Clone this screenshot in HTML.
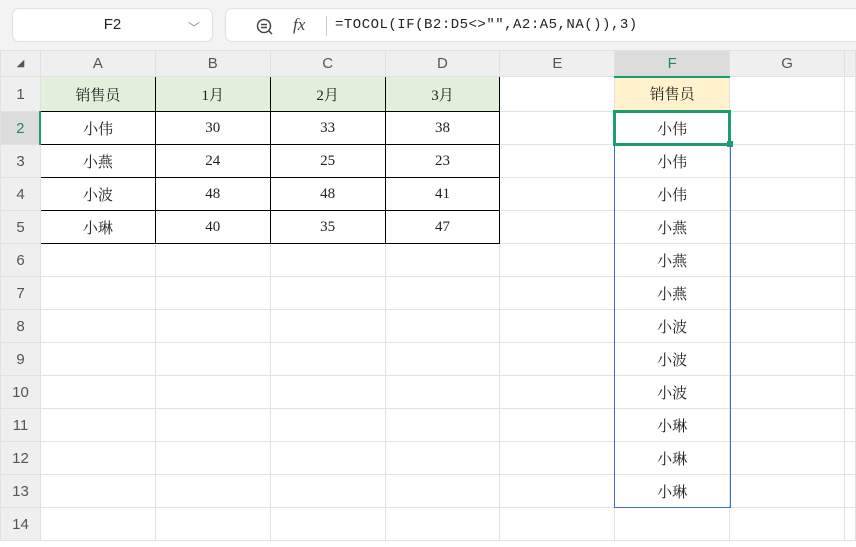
<!DOCTYPE html>
<html><head><meta charset="utf-8"><style>
*{box-sizing:border-box;margin:0;padding:0}
body{width:856px;height:547px;overflow:hidden;background:#fff;font-family:"Liberation Sans","Noto Sans CJK SC",sans-serif;position:relative}
.top{position:absolute;left:0;top:0;width:856px;height:50px;background:#f3f3f3}
.nb{position:absolute;left:12px;top:8px;width:201px;height:34px;background:#fff;border:1px solid #e0e0e0;border-radius:7px;font-size:15px;line-height:32px;text-align:center;color:#222}
.fb{position:absolute;left:225px;top:8px;width:640px;height:34px;background:#fff;border:1px solid #e0e0e0;border-radius:7px}
.ft{position:absolute;left:335px;top:8px;line-height:34px;font-family:"Liberation Mono","Noto Sans CJK SC",monospace;font-size:14px;color:#222;letter-spacing:0.5px}
table{position:absolute;left:0;top:50px;border-collapse:collapse;table-layout:fixed}
td{border:1px solid #e1e1e1;height:33px;text-align:center;font-size:15px;color:#222;padding:0;font-family:"Liberation Serif","Noto Serif CJK SC",serif}
tr.h td{height:26px;background:#efefef;color:#555;font-family:"Liberation Sans",sans-serif;font-size:15px}
td.r{background:#efefef;color:#555;font-family:"Liberation Sans",sans-serif;font-size:15px}
tr.r1 td{height:35px}
.g{background:#e2efda}
.y{background:#fff2cc}
.k{border:1px solid #000}
</style></head><body>
<div class="top"></div>
<div class="nb">F2<span style="position:absolute;right:12px;top:3px;color:#888;font-size:12px">﹀</span></div>
<div class="fb">
<svg style="position:absolute;left:29px;top:8px" width="20" height="20" viewBox="0 0 20 20"><circle cx="9" cy="9" r="6.5" fill="none" stroke="#444" stroke-width="1.5"/><path d="M6 7.5h6M6 10.5h6M14 14l3 3" stroke="#444" stroke-width="1.5"/></svg>
<span style="position:absolute;left:67px;top:6px;font-family:'Liberation Serif',serif;font-style:italic;font-size:17px;color:#444">fx</span>
<div style="position:absolute;left:100px;top:7px;width:1px;height:20px;background:#ccc"></div>
</div>
<div class="ft">=TOCOL(IF(B2:D5&lt;&gt;"",A2:A5,NA()),3)</div>
<table>
<colgroup><col style="width:40px"><col style="width:115px"><col style="width:115px"><col style="width:115px"><col style="width:115px"><col style="width:115px"><col style="width:115px"><col style="width:115px"><col style="width:11px"></colgroup>
<tr class="h"><td style="font-size:10px">◢</td><td>A</td><td>B</td><td>C</td><td>D</td><td>E</td><td style="background:#dcdcdc;color:#1e8a5e;border-bottom:2px solid #1e9c6e">F</td><td>G</td><td></td></tr>
<tr class="r1"><td class="r">1</td><td class="g k">销售员</td><td class="g k">1月</td><td class="g k">2月</td><td class="g k">3月</td><td></td><td class="y">销售员</td><td></td><td></td></tr>
<tr><td class="r" style="background:#dcdcdc;color:#1e8a5e;border-right:2px solid #1e9c6e">2</td><td class="k">小伟</td><td class="k">30</td><td class="k">33</td><td class="k">38</td><td></td><td style="border:3px solid #1e9c6e">小伟</td><td></td><td></td></tr>
<tr><td class="r">3</td><td class="k">小燕</td><td class="k">24</td><td class="k">25</td><td class="k">23</td><td></td><td>小伟</td><td></td><td></td></tr>
<tr><td class="r">4</td><td class="k">小波</td><td class="k">48</td><td class="k">48</td><td class="k">41</td><td></td><td>小伟</td><td></td><td></td></tr>
<tr><td class="r">5</td><td class="k">小琳</td><td class="k">40</td><td class="k">35</td><td class="k">47</td><td></td><td>小燕</td><td></td><td></td></tr>
<tr><td class="r">6</td><td></td><td></td><td></td><td></td><td></td><td>小燕</td><td></td><td></td></tr>
<tr><td class="r">7</td><td></td><td></td><td></td><td></td><td></td><td>小燕</td><td></td><td></td></tr>
<tr><td class="r">8</td><td></td><td></td><td></td><td></td><td></td><td>小波</td><td></td><td></td></tr>
<tr><td class="r">9</td><td></td><td></td><td></td><td></td><td></td><td>小波</td><td></td><td></td></tr>
<tr><td class="r">10</td><td></td><td></td><td></td><td></td><td></td><td>小波</td><td></td><td></td></tr>
<tr><td class="r">11</td><td></td><td></td><td></td><td></td><td></td><td>小琳</td><td></td><td></td></tr>
<tr><td class="r">12</td><td></td><td></td><td></td><td></td><td></td><td>小琳</td><td></td><td></td></tr>
<tr><td class="r">13</td><td></td><td></td><td></td><td></td><td></td><td>小琳</td><td></td><td></td></tr>
<tr><td class="r">14</td><td></td><td></td><td></td><td></td><td></td><td></td><td></td><td></td></tr>
</table>
<div style="position:absolute;left:614px;top:145px;width:117px;height:363px;border:1px solid #3a6fc8;border-top:none"></div>
<div style="position:absolute;left:727px;top:141px;width:6px;height:6px;background:#1e9c6e"></div>
</body></html>
